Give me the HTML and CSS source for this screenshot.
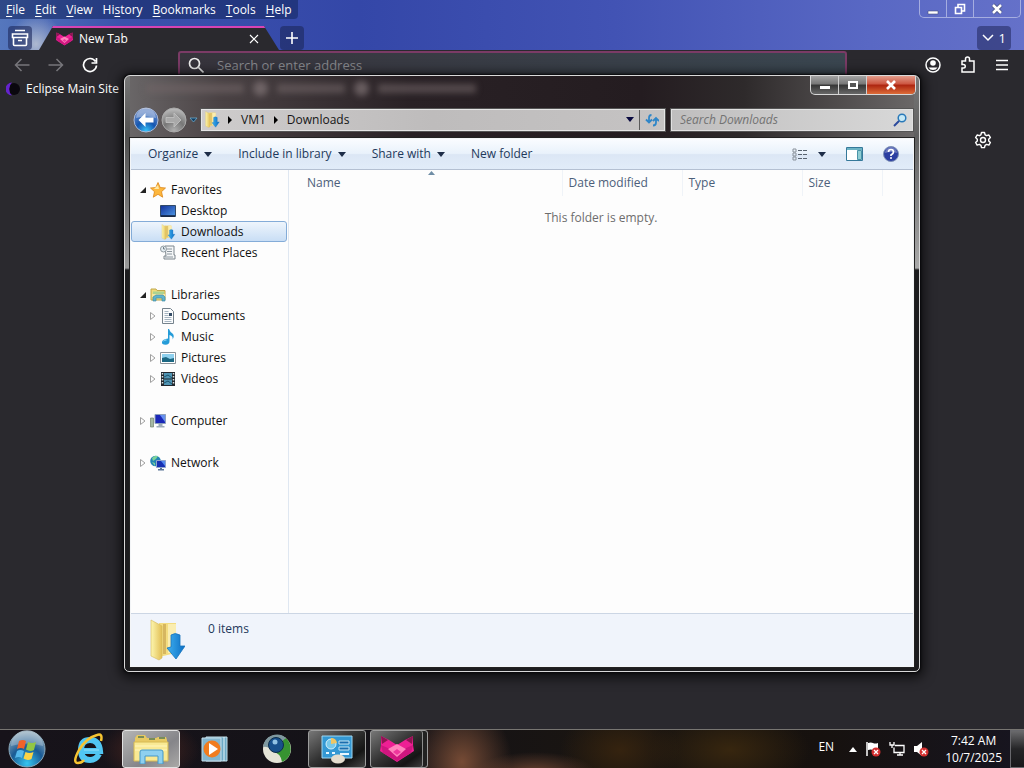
FILE: index.html
```html
<!DOCTYPE html>
<html lang="en">
<head>
<meta charset="utf-8">
<title>Downloads</title>
<link rel="stylesheet" href="styles.css">
</head>
<body>
<svg class="defs" aria-hidden="true">
  <defs>
    <linearGradient id="gFolder" x1="0" x2="1"><stop offset="0" stop-color="#fdf6ae"/><stop offset="1" stop-color="#e2bf55"/></linearGradient>
    <linearGradient id="gArrow" x1="0" x2="1"><stop offset="0" stop-color="#3fb0f0"/><stop offset="1" stop-color="#0c6ec4"/></linearGradient>
    <linearGradient id="gScreen" x1="0" x2="1" y2="1"><stop offset="0" stop-color="#12309a"/><stop offset="1" stop-color="#4f9ae6"/></linearGradient>
    <radialGradient id="gOrb" cx=".5" cy=".9" r=".9"><stop offset="0" stop-color="#35c5f0"/><stop offset=".5" stop-color="#1a5a94"/><stop offset="1" stop-color="#9db4c2"/></radialGradient>
    <radialGradient id="gBack" cx=".5" cy=".95" r=".8"><stop offset="0" stop-color="#38c4fa"/><stop offset=".5" stop-color="#1556b0"/><stop offset="1" stop-color="#5f83c4"/></radialGradient>
    <radialGradient id="gFwd" cx=".5" cy=".95" r=".9"><stop offset="0" stop-color="#b0b0b0"/><stop offset=".5" stop-color="#777"/><stop offset="1" stop-color="#b8b8b8"/></radialGradient>
    <symbol id="dl" viewBox="0 0 36 42">
      <path d="M10 4h17v30l-17 4z" fill="#f3dc80"/><path d="M14 5h3v30h-3z" fill="#d6b660"/><path d="M19 5h8v29h-8z" fill="#faedb0"/>
      <path d="M2 1l11 6v32L10 41 2 37z" fill="url(#gFolder)" stroke="#d5b95a" stroke-width=".6"/>
      <path d="M22 16q4-3 9 0v11h5L27 40l-9-11 4-1z" fill="url(#gArrow)" stroke="#1674bd" stroke-width=".8"/>
    </symbol>
    <symbol id="fox" viewBox="0 0 34 26">
      <path d="M1 0l8 4 8 5 8-5 8-4v9l1 6-17 11L0 15l1-6z" fill="#ee1f94"/><path d="M1 0l7 4-6 4zM33 0l-7 4 6 4z" fill="#8f1552"/>
      <path d="M1 9l16 7 16-7-2 8-14 8-14-8z" fill="#cf167f"/><path d="M8 13l9-5 9 5-9 8z" fill="#ff83bd"/><path d="M13 16l4-3 4 3-4 3z" fill="#ef379d"/>
    </symbol>
  </defs>
</svg>
<div class="desktop">
  <section class="browser">
    <div class="chrome">
      <div class="menu-row">
        <nav class="menubar">
          <button><u>F</u>ile</button><button><u>E</u>dit</button><button><u>V</u>iew</button><button>Hi<u>s</u>tory</button><button><u>B</u>ookmarks</button><button><u>T</u>ools</button><button><u>H</u>elp</button>
        </nav>
        <div class="frame-controls">
          <button aria-label="Minimize"><svg width="12" height="12"><path d="M1 8h10v3H1z" fill="#fff" stroke="#46507e" stroke-width=".6"/></svg></button>
          <button aria-label="Restore"><svg width="12" height="12" fill="none" stroke="#fff" stroke-width="1.600"><path d="M4 4V1.500h6.500V8H8M1.500 4.500h6v6h-6z"/></svg></button>
          <button class="wide" aria-label="Close"><svg width="12" height="12"><path d="M2 2l8 8M10 2l-8 8" stroke="#46507e" stroke-width="4"/><path d="M2 2l8 8M10 2l-8 8" stroke="#fff" stroke-width="2.500"/></svg></button>
        </div>
      </div>
      <div class="tab-row">
        <button class="strip-btn" aria-label="Recent browsing"><svg width="18" height="18" fill="none" stroke="#fff" stroke-width="1.600"><path d="M4 1.500h10M1.500 5h15v3.500h-15zM2.500 8.500v7q0 1 1 1h11q1 0 1-1v-7M7 11.500h4"/></svg></button>
        <div class="tab"><svg width="17" height="14"><use href="#fox"/></svg><span>New Tab</span><button aria-label="Close tab"><svg width="10" height="10" stroke="#fff" stroke-width="1.200"><path d="M1 1l8 8M9 1l-8 8"/></svg></button></div>
        <button class="strip-btn" aria-label="New tab"><svg width="14" height="14" stroke="#fff" stroke-width="1.600"><path d="M7 1v12M1 7h12"/></svg></button>
        <button class="tab-list"><svg width="12" height="8" fill="none" stroke="#fff" stroke-width="1.500"><path d="M1 1l5 5 5-5"/></svg>1</button>
      </div>
    </div>
    <div class="nav-row">
      <div class="nav-left">
        <button aria-label="Back"><svg width="16" height="16" fill="none" stroke="#77767b" stroke-width="1.500"><path d="M15.500 8H1.500M7.500 2l-6 6 6 6"/></svg></button>
        <button aria-label="Forward"><svg width="16" height="16" fill="none" stroke="#77767b" stroke-width="1.500"><path d="M.5 8h14M8.500 2l6 6-6 6"/></svg></button>
        <button aria-label="Reload"><svg width="16" height="16" fill="none" stroke="#fff" stroke-width="1.700"><path d="M13.500 4.500A6.500 6.500 0 1 0 14.500 8.500M14.500 1v5h-5"/></svg></button>
      </div>
      <label class="urlbar"><svg width="16" height="16" fill="none" stroke="#eee" stroke-width="1.700"><circle cx="6.500" cy="6.500" r="5"/><path d="M10.500 10.500l5 5"/></svg><input type="text" placeholder="Search or enter address" aria-label="Search or enter address"></label>
      <div class="nav-right">
        <button aria-label="Account"><svg width="16" height="16"><circle cx="8" cy="8" r="7" fill="none" stroke="#fff" stroke-width="1.500"/><circle cx="8" cy="6" r="2.800" fill="#fff"/><path d="M3.500 10.500h9Q11 13 8 13t-4.500-2.500z" fill="#fff"/></svg></button>
        <button aria-label="Extensions"><svg width="16" height="17" fill="none" stroke="#fff" stroke-width="1.500"><path d="M2 5h3.500V3a2 2 0 0 1 4 0v2H14v11H2v-4h1.500a1.700 1.700 0 0 0 0-3.500H2z"/></svg></button>
        <button aria-label="Menu"><svg width="14" height="12" stroke="#fff" stroke-width="1.500"><path d="M1 1.500h12M1 6h12M1 10.500h12"/></svg></button>
      </div>
    </div>
    <div class="bookmarks"><a href="#"><svg width="14" height="14"><circle cx="8" cy="7" r="6" fill="#0a070e"/><path d="M6 .5A6.500 6.500 0 0 0 6 13.500 9 9 0 0 1 6 .5z" fill="#6523cd"/></svg>Eclipse Main Site</a></div>
    <div class="page"><button aria-label="Customize"><svg width="18" height="18" fill="none" stroke="#fff" stroke-width="1.400" stroke-linejoin="round"><path d="M7.500 1.500h3l.6 2.300 1.500.9 2.300-.7 1.500 2.600-1.700 1.600v1.700l1.700 1.600-1.500 2.600-2.300-.7-1.500.9-.6 2.300h-3l-.6-2.300-1.500-.9-2.300.7-1.500-2.600 1.700-1.600V8.200L1.600 6.600l1.500-2.600 2.300.7 1.500-.9z"/><circle cx="9" cy="9" r="2.500"/></svg></button></div>
  </section>

  <section class="explorer" aria-label="Downloads">
    <div class="title-row">
      <div class="ghosts" aria-hidden="true"><i class="long"></i><b></b><i></i><b></b><i class="long"></i></div>
      <div class="win-controls">
        <button aria-label="Minimize"><svg width="14" height="12"><path d="M2 7h10v3H2z" fill="#fff"/></svg></button>
        <button aria-label="Maximize"><svg width="14" height="12"><path d="M3 3h8v6H3z" fill="#555" stroke="#fff" stroke-width="2"/></svg></button>
        <button class="close" aria-label="Close"><svg width="14" height="12"><path d="M3 2l8 8M11 2l-8 8" stroke="#fff" stroke-width="2.600"/></svg></button>
      </div>
    </div>
    <div class="address-row">
      <div class="history">
        <button aria-label="Back"><svg width="26" height="26"><circle cx="13" cy="13" r="12" fill="url(#gBack)" stroke="#a9b8d6"/><path d="M3 11a10 10 0 0 1 20 0Q13 8 3 11z" fill="#fff" opacity=".35"/><path d="M12.500 6l-7 7 7 7v-4.500h8v-5h-8z" fill="#fff"/></svg></button>
        <button aria-label="Forward"><svg width="26" height="26"><circle cx="13" cy="13" r="12" fill="url(#gFwd)" stroke="#aaa"/><path d="M13 6l7 7-7 7v-4.500H5v-5h8z" fill="#a9a9a9" stroke="#c4c4c4" stroke-width=".8"/></svg></button>
        <button aria-label="Recent pages"><svg width="9" height="6"><path d="M1 1h7L4.500 5z" fill="#123e62" stroke="#73b5d8" stroke-width=".7"/></svg></button>
      </div>
      <div class="address">
        <svg width="16" height="17"><use href="#dl"/></svg>
        <button aria-label="Locations"><svg width="5" height="8"><path d="M0 0l4 4-4 4z"/></svg></button>
        <button>VM1</button>
        <button aria-label="VM1 folders"><svg width="5" height="8"><path d="M0 0l4 4-4 4z"/></svg></button>
        <button>Downloads</button>
        <button class="drop" aria-label="Previous locations"><svg width="8" height="5"><path d="M0 0h8L4 5z" fill="#0a0a40"/></svg></button>
        <button class="refresh" aria-label="Refresh"><svg width="14" height="14" fill="none" stroke="#2f86c8" stroke-width="1.800"><path d="M6.500 2Q4 2 4 5v4M1 6.500l3 3 3-3M8 12.500q3 0 3-3v-4M8 8l3-3 3 3"/></svg></button>
      </div>
      <label class="search"><input type="search" placeholder="Search Downloads" aria-label="Search Downloads"><svg width="14" height="14" fill="none"><circle cx="9" cy="5" r="3.800" fill="#c7e9f6" stroke="#2979b9" stroke-width="1.500"/><path d="M6 8l-5 5" stroke="#2c4a9c" stroke-width="2"/></svg></label>
    </div>
    <div class="client">
      <div class="toolbar">
        <button>Organize<svg width="8" height="5"><path d="M0 0h8L4 5z"/></svg></button>
        <button>Include in library<svg width="8" height="5"><path d="M0 0h8L4 5z"/></svg></button>
        <button>Share with<svg width="8" height="5"><path d="M0 0h8L4 5z"/></svg></button>
        <button>New folder</button>
        <div class="tools">
          <button aria-label="Change view"><svg class="view" width="16" height="13"><path d="M1 1h3v3H1zM1 5h3v3H1zM1 9h3v3H1z" fill="none" stroke="#8a929b"/><path d="M6 2.500h4M11 2.500h4M6 6.500h4M11 6.500h4M6 10.500h4M11 10.500h4" stroke="#59636f"/></svg><svg width="8" height="5"><path d="M0 0h8L4 5z"/></svg></button>
          <button aria-label="Preview pane"><svg width="17" height="14"><path d="M.5.5h16v13H.5z" fill="#fff" stroke="#35799a"/><path d="M1 2h15" stroke="#6cb3c4" stroke-width="2"/><path d="M11.500 3.500h4v9h-4z" fill="#8fcdd3" stroke="#4a93a8"/></svg></button>
          <button aria-label="Help"><svg width="16" height="16"><circle cx="8" cy="8" r="7.500" fill="#2c3fa2" stroke="#7e91b7"/><path d="M2 7a6 6 0 0 1 12 0Q8 5 2 7z" fill="#fff" opacity=".3"/><path d="M5.500 6q0-2.500 2.500-2.500T10.500 6Q10.500 7.500 8 9v1" fill="none" stroke="#fff" stroke-width="1.700"/><circle cx="8" cy="12" r="1" fill="#fff"/></svg></button>
        </div>
      </div>
      <div class="panes">
        <nav class="tree">
          <ul>
            <li class="top"><a href="#"><svg class="tw" viewBox="0 0 6 6"><path d="M6 0v6H0z" fill="#222"/></svg><svg class="ic" viewBox="0 0 16 16"><path d="M8 .5l2.200 5 5.300.5-4 3.700 1.200 5.500L8 12.300l-4.700 2.900 1.200-5.500L.5 6l5.300-.5z" fill="#fdb73d" stroke="#dc8518" stroke-width=".8"/><path d="M8 3l1 4-5 0z" fill="#ffe9a6"/></svg>Favorites</a>
              <ul>
                <li><a href="#"><svg class="ic" viewBox="0 0 16 16"><path d="M.5 2.500h15v11H.5z" fill="url(#gScreen)" stroke="#314a68"/><path d="M1 13h14" stroke="#111e38" stroke-width="1.500"/></svg>Desktop</a></li>
                <li><a href="#" class="sel"><svg class="ic"><use href="#dl"/></svg>Downloads</a></li>
                <li><a href="#"><svg class="ic" viewBox="0 0 16 16"><path d="M5 1h9v9h1v4H4v-3h2z" fill="#f4f6f7" stroke="#7d868d"/><path d="M7 4h5M7 6.500h5M7 9h5M5 12h8" stroke="#8c969e"/><circle cx="3.500" cy="4" r="3" fill="#e4edf2" stroke="#909aa0"/><path d="M3.500 2v2H5" fill="none" stroke="#59646d" stroke-width=".8"/></svg>Recent Places</a></li>
              </ul>
            </li>
            <li class="top"><a href="#"><svg class="tw" viewBox="0 0 6 6"><path d="M6 0v6H0z" fill="#222"/></svg><svg class="ic" viewBox="0 0 16 16"><path d="M1 2h5l1 1.500h8V13H1z" fill="#f0db7c" stroke="#c1a84b"/><path d="M3 4.500h11v3H3z" fill="#acd391"/><path d="M2 7h13v3H2z" fill="#f4e7a0"/><path d="M3 14v-4l3-2h7l2 2v4h-3v-3H6v3z" fill="#5fb4cd" stroke="#438ca6" stroke-width=".7"/></svg>Libraries</a>
              <ul>
                <li><a href="#"><svg class="tw" viewBox="0 0 6 8"><path d="M.5.5L5 4 .5 7.500z" fill="none" stroke="#a0a0a0"/></svg><svg class="ic" viewBox="0 0 16 16"><path d="M2.500.5h8l3 3v12h-11z" fill="#fbfcfd" stroke="#75828c"/><path d="M4.500 3.500h4M4.500 5.500h4M4.500 7.500h4M4.500 9.500h7M4.500 11.500h7M4.500 13.500h7" stroke="#91a2b1" stroke-width=".8"/><path d="M9 5h3v3H9z" fill="#344c66"/></svg>Documents</a></li>
                <li><a href="#"><svg class="tw" viewBox="0 0 6 8"><path d="M.5.5L5 4 .5 7.500z" fill="none" stroke="#a0a0a0"/></svg><svg class="ic" viewBox="0 0 16 16"><path d="M8 0h1q1 3 3.500 4.500Q15 7 12.500 10.500 13.500 7 9.500 6v6q0 3.800-4 3.800T2 13t6-3.500z" fill="#259cd8"/><path d="M3.500 12q1-1.300 3-1" stroke="#a6e3fa" fill="none"/></svg>Music</a></li>
                <li><a href="#"><svg class="tw" viewBox="0 0 6 8"><path d="M.5.5L5 4 .5 7.500z" fill="none" stroke="#a0a0a0"/></svg><svg class="ic" viewBox="0 0 16 16"><path d="M.5 2.500h15v11H.5z" fill="#fff" stroke="#8a9299"/><path d="M2 4h12v8H2z" fill="#8ed0ee"/><path d="M2 12V8l4-1 4 2 4-1v4z" fill="#1c6883"/></svg>Pictures</a></li>
                <li><a href="#"><svg class="tw" viewBox="0 0 6 8"><path d="M.5.5L5 4 .5 7.500z" fill="none" stroke="#a0a0a0"/></svg><svg class="ic" viewBox="0 0 16 16"><path d="M1 1h14v14H1z" fill="#22282e"/><path d="M4 2h8v5.500H4zM4 8.500h8V14H4z" fill="#5095b4"/><path d="M4 6l4-2 4 3M4 12l4-2 4 3" stroke="#1b536c" fill="none"/><path d="M2.500 2v12M13.500 2v12" stroke="#dde3e6" stroke-width="1.500" stroke-dasharray="1.500 1.500"/></svg>Videos</a></li>
              </ul>
            </li>
            <li class="top"><a href="#"><svg class="tw" viewBox="0 0 6 8"><path d="M.5.5L5 4 .5 7.500z" fill="none" stroke="#a0a0a0"/></svg><svg class="ic" viewBox="0 0 16 16"><path d="M.5 5h3v9h-3z" fill="#a5b9a4" stroke="#72826e" stroke-width=".7"/><path d="M5 1.500h10.500v9H5z" fill="#1a28b8" stroke="#8da0bc"/><path d="M10 2l5 0v7z" fill="#6690ef"/><path d="M8.500 11h4v2h2v1.500h-8V13h2z" fill="#9dacb9"/></svg>Computer</a></li>
            <li class="top"><a href="#"><svg class="tw" viewBox="0 0 6 8"><path d="M.5.5L5 4 .5 7.500z" fill="none" stroke="#a0a0a0"/></svg><svg class="ic" viewBox="0 0 16 16"><circle cx="5.500" cy="6" r="5.300" fill="#2384b5"/><path d="M2 3q3-3 6-2L6 4 3 6zM2 7l3 1v3z" fill="#7dd399"/><path d="M6.500 5.500h9v7h-9z" fill="#1630b3" stroke="#91a5cc"/><path d="M11 6h4v5z" fill="#558bf0"/><path d="M10 13h2v1h2v1.500H8V14h2z" fill="#5c7798"/></svg>Network</a></li>
          </ul>
        </nav>
        <div class="files">
          <table>
            <thead><tr><th class="name" aria-sort="ascending">Name<svg class="sort" width="7" height="4"><path d="M0 4l3.500-4L7 4z" fill="#6f8da5"/></svg></th><th class="mid">Date modified</th><th class="mid">Type</th><th class="size">Size</th><th></th></tr></thead>
          </table>
          <p>This folder is empty.</p>
        </div>
      </div>
      <footer class="details"><svg width="36" height="42"><use href="#dl"/></svg><span>0 items</span></footer>
    </div>
  </section>

  <footer class="taskbar">
    <div class="apps">
      <button class="start" aria-label="Start"><svg width="38" height="38" viewBox="0 0 38 38"><circle cx="19" cy="19" r="18" fill="url(#gOrb)" stroke="#8caabb"/><path d="M3 16a16 16 0 0 1 32 0Q19 11 3 16z" fill="#fff" opacity=".25"/><path d="M11 11q4-2 7 0l-2 8q-3-2-7 0z" fill="#f0622a"/><path d="M20 12q4 2 8 0l-2 8q-4 2-8-.5z" fill="#92c645"/><path d="M9 21q3-2 7 0l-2 7q-3-2-7 0z" fill="#55b7eb"/><path d="M17.500 22q4 2 8 0l-2 7q-4 2-8-.5z" fill="#fcd344"/></svg></button>
      <button aria-label="Internet Explorer"><svg width="34" height="34" viewBox="0 0 34 34" fill="none"><path d="M27 22q-3 6-9 6-9 0-9-10t9-10q9 0 10 11H12" stroke="#51c6f2" stroke-width="6"/><path d="M12 18h15" stroke="#c9f2ff" stroke-width="1" opacity=".6"/><path d="M29 9Q31 1 25 3 14 6 7 18 0 31 6 31q4 0 6-3" stroke="#f6c431" stroke-width="2.500"/></svg></button>
      <button class="task active" aria-label="File Explorer"><svg width="36" height="30" viewBox="0 0 36 30"><path d="M2 4l2-3h8l2 3h9l2-1h8l1 3v20H2z" fill="#e7c962"/><path d="M5 3h6M16 5h6M26 4h6" stroke="#567a56" stroke-width="1.500"/><path d="M1 8h34v19H1z" fill="#f9e994" stroke="#d6b952"/><path d="M2 12h32M2 16h32" stroke="#fff6bf"/><path d="M7 30V18q0-2 2-2h19q2 0 2 2v12h-5v-8H12v8z" fill="#8ed0ef" stroke="#4598c8"/></svg></button>
      <button aria-label="Media Player"><svg width="28" height="26" viewBox="0 0 28 26"><path d="M5 1h21v24H5z" fill="#6da9c5" stroke="#c4e0eb"/><path d="M23 1v24" stroke="#e4f5fc"/><path d="M1 2h19v23H1z" fill="#83b6cf" stroke="#c6deea"/><circle cx="11" cy="13" r="8.500" fill="#f17c1e"/><path d="M8 7l9 6-9 6z" fill="#fff"/></svg></button>
      <button aria-label="Web browser"><svg width="32" height="32" viewBox="0 0 32 32"><circle cx="16" cy="16" r="14" fill="#e4e4d7"/><path d="M22 3.500a14 14 0 0 1-1 25.500q-1-9-12-12 9 3 13-4z" fill="#379331"/><path d="M2 14A14 14 0 0 1 25 5L11 17Q7 13 2 14z" fill="#7f989f"/><circle cx="15" cy="12" r="7.500" fill="#18508c" stroke="#0d2d4c"/><circle cx="14" cy="9" r="2.500" fill="#91c2e4"/></svg></button>
      <button class="task" aria-label="Control Panel"><svg width="32" height="30" viewBox="0 0 32 30"><path d="M1 2h30v22H1z" fill="#3498d3" stroke="#9fd7f1"/><circle cx="10" cy="10" r="5" fill="#77c8ea" stroke="#d4f1fc"/><path d="M10 10V4a6 6 0 0 1 6 5z" fill="#f0c664"/><path d="M18 7h10v3H18zM18 13h10v3H18z" fill="#1a6dad" stroke="#c7e7f4"/><path d="M5 19h3M11 19h3M19 20h9" stroke="#e7f7ff" stroke-width="2"/><ellipse cx="17" cy="25" rx="7" ry="4.500" fill="#e4ddce"/></svg></button>
      <button class="task stacked" aria-label="Eclipse browser"><svg width="34" height="26"><use href="#fox"/></svg></button>
    </div>
    <div class="tray">
      <button class="lang">EN</button>
      <button aria-label="Show hidden icons"><svg width="8" height="5"><path d="M0 5l4-5 4 5z" fill="#fff"/></svg></button>
      <button aria-label="Action Center"><svg width="16" height="16"><path d="M2 1v14" stroke="#fff" stroke-width="1.500"/><path d="M3 2q3-1 5 0t5 0v7q-3 1-5 0T3 9z" fill="#fff"/><circle cx="11" cy="11" r="4.500" fill="#d32f2f"/><path d="M9 9l4 4M13 9l-4 4" stroke="#fff" stroke-width="1.300"/></svg></button>
      <button aria-label="Network"><svg width="16" height="16" fill="none" stroke="#fff" stroke-width="1.300"><path d="M6 4.500h9v7H5v-5M8 14h6M11 11.500V14M1 1v3h4V1M3 4v3"/></svg></button>
      <button aria-label="Volume"><svg width="16" height="16"><path d="M1 5h3l5-4v14l-5-4H1z" fill="#fff"/><circle cx="11" cy="11" r="4.500" fill="#d32f2f"/><path d="M9 9l4 4M13 9l-4 4" stroke="#fff" stroke-width="1.300"/></svg></button>
      <time>7:42 AM<br>10/7/2025</time>
      <button class="peek" aria-label="Show desktop"></button>
    </div>
  </footer>
</div>
</body>
</html>
```

FILE: styles.css
```css
* { box-sizing: border-box; }
html, body { height: 100%; }
body { margin: 0; font: 12px/16px "Open Sans", "Noto Sans", sans-serif; }
button { border: 0; padding: 0; background: none; color: inherit; font: inherit; }
input { border: 0; padding: 0; outline: 0; background: none; font: inherit; min-width: 0; }
svg { display: block; flex: none; }
a { color: inherit; text-decoration: none; }
ul { list-style: none; margin: 0; padding: 0; }
.defs { position: absolute; width: 0; height: 0; }

.desktop { position: relative; display: flex; flex-direction: column; height: 100vh; overflow: hidden; }

.browser { flex: 1; display: flex; flex-direction: column; background: #2a292e; color: #fff; }
.chrome {
  background:
    radial-gradient(ellipse 28px 30px at 36px 44px, rgba(205,210,215,.75), transparent),
    linear-gradient(90deg, #5577bd 0, #3b52ac 12%, #3447a8 35%, #4253b4 60%, #5968c4 85%, #6571c9 100%);
}
.menu-row { display: flex; justify-content: space-between; height: 26px; align-items: flex-start; }
.menubar { display: flex; gap: 10px; padding: 2px 6px 1px; background: rgba(22,42,100,.6); border-radius: 0 0 4px 0; }
.menubar u { text-underline-offset: 2px; }
.frame-controls { display: flex; margin-right: 3px; border: 1px solid #a5ade0; border-top: 0; border-radius: 0 0 5px 5px; }
.frame-controls button { display: grid; place-items: center; width: 27px; height: 17px; border-right: 1px solid #a5ade0; }
.frame-controls .wide { width: 46px; border: 0; }
.tab-row { display: flex; height: 24px; padding: 0 13px 0 8px; }
.strip-btn { display: grid; place-items: center; width: 24px; background: rgba(28,40,92,.6); border-radius: 4px; }
.tab {
  display: flex; align-items: center; gap: 6px; width: 240px; margin: 0 1px 0 7px; padding: 0 20px 0 17px;
  background: #2a292e; border-top: 2px solid #d843b4;
  clip-path: polygon(14px 0, calc(100% - 15px) 0, 100% 100%, 0 100%);
}
.tab span { flex: 1; }
.tab-list { display: flex; align-items: center; gap: 5px; margin-left: auto; padding: 0 5px; background: rgba(50,58,120,.75); border-radius: 4px; font-size: 13px; }
.nav-row { display: flex; height: 29px; align-items: stretch; }
.nav-left { display: flex; align-items: center; gap: 18px; width: 178px; padding-left: 14px; }
.urlbar { flex: 1; display: flex; align-items: center; gap: 13px; margin-top: 1px; padding-left: 8px; border: 2px solid #7b3b66; border-radius: 3px; background: linear-gradient(90deg, #37343c, #3a4650); }
.urlbar input { flex: 1; font-size: 13px; }
.urlbar input::placeholder { color: #88898e; opacity: 1; }
.nav-right { display: flex; align-items: center; justify-content: flex-end; gap: 19px; width: 177px; padding-right: 15px; }
.bookmarks { padding: 2px 6px; }
.bookmarks a { display: inline-flex; align-items: center; gap: 6px; }
.page { display: flex; justify-content: flex-end; padding: 29px 32px 0 0; }

.explorer {
  position: absolute; inset: 75px 104px 96px 124px; display: flex; flex-direction: column; padding: 0 5px 4px;
  border: 1px solid #d9d9d9; border-radius: 6px 6px 5px 5px; box-shadow: 0 0 2px 1px #08080a, 0 2px 12px 4px rgba(0,0,0,.65);
  background:
    linear-gradient(180deg, #777 0, #505050 60px, #999 192px, #1c1c1e 194px) left / 5px 100% no-repeat,
    linear-gradient(180deg, #777 0, #606060 60px, #aaa 192px, #1c1c1e 194px) right / 5px 100% no-repeat,
    linear-gradient(90deg, #6b6869 0, #4a4244 12%, #292125 36%, #241c20 65%, #2e2a2b 78%, #6c6969 100%) top / 100% 64px no-repeat,
    #1c1c1e;
}
.title-row { display: flex; justify-content: space-between; height: 31px; }
.ghosts { display: flex; align-items: center; gap: 9px; height: 25px; padding-left: 16px; filter: blur(3px); }
.ghosts i { width: 68px; height: 9px; background: #716568; opacity: .6; }
.ghosts .long { width: 98px; }
.ghosts b { width: 15px; height: 15px; border-radius: 50%; background: #8c7e81; opacity: .6; }
.win-controls { display: flex; height: 19px; margin-right: -2px; border: 1px solid #d8d8d8; border-top: 0; border-radius: 0 0 5px 5px; overflow: hidden; background: linear-gradient(#a3a3a3, #777 45%, #353535 50%, #686868); }
.win-controls button { display: grid; place-items: center; width: 28px; border-right: 1px solid #cfcfcf; }
.win-controls .close { width: 48px; border: 0; background: linear-gradient(#e29c8b, #cc5540 45%, #ac2410 50%, #dc6c38); }
.address-row { display: flex; align-items: center; gap: 6px; height: 31px; padding: 0 1px 6px 3px; }
.history { display: flex; align-items: center; gap: 2px; }
.address { flex: 1; display: flex; align-items: center; height: 22px; gap: 8px; padding-left: 2px; margin-left: -3px; border: 1px solid #e5e5e5; outline: 1px solid #555; background: linear-gradient(90deg, #cecccc, #bebcbc 50%, #c5c3c3); color: #151515; }
.address .drop { margin-left: auto; }
.address .refresh { display: grid; place-items: center; align-self: stretch; width: 25px; margin-left: -3px; border-left: 1px solid #5b5b5b; }
.search { display: flex; align-items: center; width: 242px; height: 22px; padding: 0 5px 0 8px; border: 1px solid #e1e1e1; outline: 1px solid #555; background: linear-gradient(90deg, #bfbebe, #d8d8d8); }
.search input { flex: 1; font-style: italic; }
.search input::placeholder { color: #737373; opacity: 1; }

.client { flex: 1; min-height: 0; display: flex; flex-direction: column; border: 1px solid #f3f5f7; outline: 1px solid #222; background: #fdfdfd; }
.toolbar { display: flex; align-items: center; gap: 26px; height: 31px; padding: 0 14px 0 17px; border-bottom: 1px solid #b4c0d2; background: linear-gradient(#fafcff, #e9f2fb 48%, #dce7f5 52%, #e1ecf9); color: #1e395b; }
.toolbar button { display: flex; align-items: center; gap: 6px; fill: #1e2d48; }
.tools { display: flex; align-items: center; gap: 20px; margin-left: auto; }
.tools .view { margin-right: 4px; }
.panes { flex: 1; min-height: 0; display: flex; }
.tree { width: 158px; padding-top: 9px; border-right: 1px solid #dfe7f1; color: #111; }
.tree a { display: flex; align-items: center; height: 21px; padding-left: 8px; border: 1px solid transparent; border-radius: 3px; }
.tree ul ul a { padding-left: 28px; }
.tree ul ul a:has(.tw) { padding-left: 18px; }
.tree .top { margin-bottom: 21px; }
.tree .sel { border-color: #84acd8; background: linear-gradient(#eef5fc, #c9def5); margin-right: 1px; }
.tw { width: 6px; height: 8px; margin-right: 4px; }
.ic { width: 16px; height: 16px; margin-right: 5px; }
.files { flex: 1; min-width: 0; padding-left: 6px; }
.files table { width: 100%; border-collapse: collapse; table-layout: fixed; }
.files th { position: relative; height: 26px; padding: 0 6px; border-right: 1px solid #eff3f8; text-align: left; font-weight: 400; color: #4c607a; }
.files th:last-child { border: 0; }
.files .name { width: 267px; padding-left: 12px; }
.files .mid { width: 120px; }
.files .size { width: 80px; }
.sort { position: absolute; top: 1px; left: 50%; }
.files p { margin: 14px 6px 0 0; text-align: center; color: #6d6d6d; }
.details { display: flex; height: 53px; padding: 5px 18px; gap: 23px; border-top: 1px solid #ccd6e4; background: #f0f4fb; color: #1e395b; }
.details span { padding-top: 2px; }

.taskbar {
  display: flex; justify-content: space-between; height: 39px; border-top: 1px solid #777571; color: #fff;
  background:
    radial-gradient(ellipse 50px 30px at 150px 20px, #4a2620, transparent),
    radial-gradient(ellipse 50px 60px at 462px 32px, #764b35, transparent),
    radial-gradient(ellipse 60px 20px at 535px 42px, #65402f, transparent),
    radial-gradient(ellipse 60px 40px at 620px 20px, #35230f, transparent),
    radial-gradient(ellipse 80px 40px at 730px 20px, #37260f, transparent),
    linear-gradient(90deg, #17131a, #141217 40%, #1a1510 60%, #16110e 80%, #171520);
}
.apps, .tray { display: flex; align-items: center; }
.apps button { display: grid; place-items: center; width: 62px; height: 38px; }
.apps .start { width: 58px; padding-right: 4px; }
.apps .task { width: 58px; margin-right: 4px; border: 1px solid #9c9c9c; border-radius: 3px; background: linear-gradient(145deg, #777 0, #333 45%, #151515 75%, #444); }
.apps .task.active { margin-left: 2px; border-color: #e1e1e1; background: linear-gradient(145deg, #b5b5b5, #858589 60%, #aaa9a7); }
.apps .stacked { box-shadow: inset -4px 0 #222, inset -5px 0 #8d8d8d; padding-right: 5px; }
.tray { gap: 8px; }
.tray .lang { margin-right: 7px; padding-bottom: 5px; }
.tray time { margin-left: 8px; text-align: center; line-height: 17px; }
.peek { width: 14px; height: 38px; margin-left: 0; border: 1px solid #68686c; border-right: 0; background: linear-gradient(#6a6a6c, #252527 50%, #18181a); }
```
